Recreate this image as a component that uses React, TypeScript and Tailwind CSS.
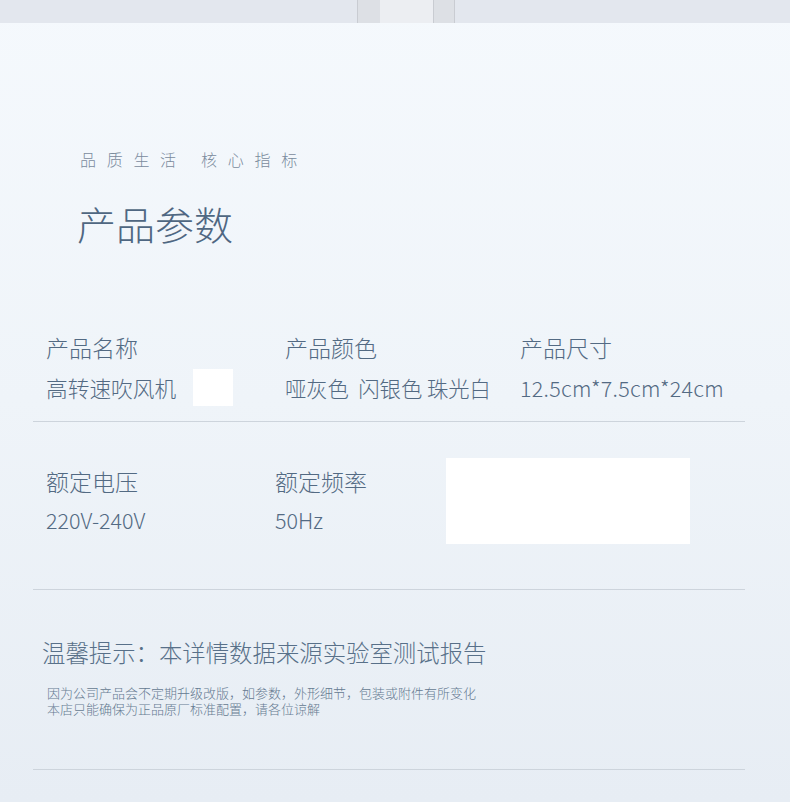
import React from 'react';

const font = { fontFamily: '"Noto Sans CJK SC", "Noto Sans", sans-serif' };

function Divider({ className = '' }: { className?: string }) {
  return <div className={`h-px w-[712px] bg-[#cdd4dc] ${className}`} />;
}

export default function App() {
  return (
    <div style={font} className="flex h-[802px] w-full flex-col overflow-hidden bg-linear-to-b from-[#f5f9fd] via-[#eff4f9] to-[#e7edf4] font-light">
      {/* 顶部产品图片残边 */}
      <div className="flex h-[23px] shrink-0 bg-[#e3e7ee]">
        <div className="w-[357px]" />
        <div className="w-[23px] border-l border-[#c9ccd2] bg-[#dde0e5]" />
        <div className="w-[53px] bg-[#eceef2]" />
        <div className="w-[22px] border-x border-[#c9ccd2] bg-[#dde0e5]" />
      </div>

      <div className="flex flex-col px-[33px]">
        {/* 标题 */}
        <div className="mt-[124px] pl-[47px] text-[16px] leading-[24px] tracking-[10.7px] text-[#7a8b9d]">
          品质生活 核心指标
        </div>
        <h1 className="mt-[28px] pl-[44px] text-[39px] leading-[48px] text-[#4f6782]">产品参数</h1>

        {/* 第一行参数 */}
        <div className="mt-[85px] flex pl-[13px] text-[#536a83]">
          <div className="flex w-[239px] flex-col">
            <div className="text-[23px] leading-[30px]">产品名称</div>
            <div className="mt-[7px] flex h-[37px] items-center">
              <span className="text-[21.7px] leading-[30px]">高转速吹风机</span>
              <div className="ml-[17px] h-[37px] w-[40px] bg-white" />
            </div>
          </div>
          <div className="flex w-[235px] flex-col">
            <div className="text-[23px] leading-[30px]">产品颜色</div>
            <div className="mt-[7px] flex h-[37px] items-center whitespace-pre text-[21.3px] leading-[30px]">
              哑灰色  闪银色 珠光白
            </div>
          </div>
          <div className="flex flex-col">
            <div className="text-[23px] leading-[30px]">产品尺寸</div>
            <div className="mt-[7px] flex h-[37px] items-center text-[21.5px] leading-[30px] tracking-[0.3px]">
              12.5cm*7.5cm*24cm
            </div>
          </div>
        </div>
        <Divider className="mt-[15px]" />

        {/* 第二行参数 */}
        <div className="mt-[36px] flex pl-[13px] text-[#536a83]">
          <div className="flex w-[229px] flex-col pt-[8px]">
            <div className="text-[23px] leading-[30px]">额定电压</div>
            <div className="mt-[9px] text-[21.5px] leading-[30px]">220V-240V</div>
          </div>
          <div className="flex w-[171px] flex-col pt-[8px]">
            <div className="text-[23px] leading-[30px]">额定频率</div>
            <div className="mt-[9px] text-[21.5px] leading-[30px]">50Hz</div>
          </div>
          <div className="h-[86px] w-[244px] bg-white" />
        </div>
        <Divider className="mt-[45px]" />

        {/* 温馨提示 */}
        <div className="mt-[47px] pl-[9px] text-[23.4px] leading-[30px] text-[#587089]">
          温馨提示：本详情数据来源实验室测试报告
        </div>
        <div className="mt-[18px] pl-[14px] text-[13px] leading-[16px] text-[#657a91]">
          <p>因为公司产品会不定期升级改版，如参数，外形细节，包装或附件有所变化</p>
          <p>本店只能确保为正品原厂标准配置，请各位谅解</p>
        </div>
        <Divider className="mt-[52px]" />
      </div>
    </div>
  );
}
